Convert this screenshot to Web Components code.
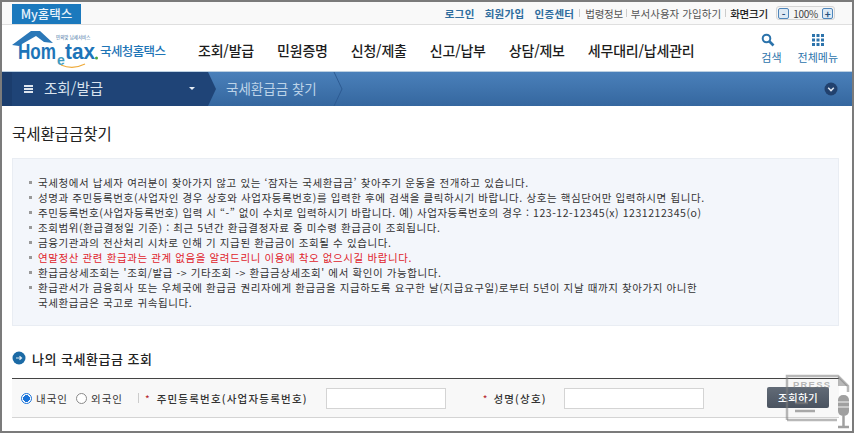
<!DOCTYPE html>
<html lang="ko">
<head>
<meta charset="utf-8">
<title>국세환급금찾기</title>
<style>
  html, body { margin: 0; height: 100%; }
  body {
    width: 854px;
    height: 433px;
    overflow: hidden;
    box-sizing: border-box;
    border: 2px solid #7b7b7b;
    background: #fff;
    font-family: "Noto Sans CJK KR", "Liberation Sans", sans-serif;
    color: #333;
    position: relative;
  }
</style>
</head>
<body>
<top-bar></top-bar>
<main-header></main-header>
<crumb-bar></crumb-bar>
<page-title>국세환급금찾기</page-title>
<notice-box>
  <notice-item>국세청에서 납세자 여러분이 찾아가지 않고 있는 ‘잠자는 국세환급금’ 찾아주기 운동을 전개하고 있습니다.</notice-item>
  <notice-item>성명과 주민등록번호(사업자인 경우 상호와 사업자등록번호)를 입력한 후에 검색을 클릭하시기 바랍니다. 상호는 핵심단어만 입력하시면 됩니다.</notice-item>
  <notice-item tight>주민등록번호(사업자등록번호) 입력 시 “-” 없이 수치로 입력하시기 바랍니다. 예) 사업자등록번호의 경우 : 123-12-12345(x) 1231212345(o)</notice-item>
  <notice-item>조회범위(환급결정일 기준) : 최근 5년간 환급결정자료 중 미수령 환급금이 조회됩니다.</notice-item>
  <notice-item>금융기관과의 전산처리 시차로 인해 기 지급된 환급금이 조회될 수 있습니다.</notice-item>
  <notice-item red>연말정산 관련 환급과는 관계 없음을 알려드리니 이용에 착오 없으시길 바랍니다.</notice-item>
  <notice-item>환급금상세조회는 '조회/발급 -&gt; 기타조회 -&gt; 환급금상세조회' 에서 확인이 가능합니다.</notice-item>
  <notice-item>환급관서가 금융회사 또는 우체국에 환급금 권리자에게 환급금을 지급하도록 요구한 날(지급요구일)로부터 5년이 지날 때까지 찾아가지 아니한<br>국세환급금은 국고로 귀속됩니다.</notice-item>
</notice-box>
<section-title>나의 국세환급금 조회</section-title>
<search-form></search-form>
<press-mark></press-mark>

<script>
class TopBar extends HTMLElement {
  constructor() {
    super();
    this.attachShadow({ mode: "open" });
    this.shadowRoot.innerHTML = `
<style>
  :host { display: flex; align-items: center; height: 22px; background: #f9f9f9; border-bottom: 1px solid #dfdfdf; padding: 0 17px 0 10px; font-size: 10.5px; color: #555; }
  .my { background: #1b79bd; color: #e8f2fa; font-size: 12.5px; font-weight: 500; width: 69px; height: 20px; line-height: 20px; text-align: center; margin-top: 2px; }
  .links { margin-left: auto; display: flex; align-items: center; }
  .b { color: #2e6d9e; font-weight: 700; margin-left: 10px; letter-spacing: .3px; }
  .b:first-child { margin-left: 0; }
  .sep { width: 1px; height: 8px; background: #ccc; margin: 0 5px; }
  .sep.n { margin: 0 3.5px; }
  .g { letter-spacing: .05px; }
  .law { letter-spacing: -.3px; }
  .size { font-weight: 500; color: #222; letter-spacing: -.2px; }
  .zoom { display: flex; align-items: center; margin-left: 8px; width: 59px; height: 14px; border: 1px solid #d5d5d5; border-radius: 3px; background: #f5f5f5; padding: 0 1px; box-sizing: border-box; justify-content: space-between; letter-spacing: -.3px; font-size: 10px; color: #444; }
  .zoom span.k { width: 11px; height: 11px; border: 1px solid #4f86bb; border-radius: 2px; background: #dde9f4; color: #24507e; line-height: 9px; text-align: center; font-weight: 700; box-sizing: border-box; }
</style>
<div class="my">My홈택스</div>
<div class="links">
  <span class="b">로그인</span><span class="b">회원가입</span><span class="b">인증센터</span>
  <i class="sep"></i><span class="law">법령정보</span>
  <i class="sep n"></i><span class="g">부서사용자 가입하기</span>
  <i class="sep n" style="margin:0 4px"></i><span class="size">화면크기</span>
  <div class="zoom"><span class="k">-</span><span>100%</span><span class="k">+</span></div>
</div>`;
  }
}

class MainHeader extends HTMLElement {
  constructor() {
    super();
    this.attachShadow({ mode: "open" });
    const menus = ["조회/발급", "민원증명", "신청/제출", "신고/납부", "상담/제보", "세무대리/납세관리"];
    this.shadowRoot.innerHTML = `
<style>
  :host { display: flex; align-items: center; height: 46px; background: #fff; border-bottom: 1px solid #bcd0e2; position: relative; }
  svg.logo { margin-left: 9px; width: 158px; height: 46px; flex: none; }
  nav { display: flex; margin-left: 29px; gap: 23px; font-size: 14px; font-weight: 500; color: #1c1c1c; letter-spacing: -.2px; margin-top: 4px; }
  .tools { margin-left: auto; display: flex; gap: 16px; margin-right: 14px; }
  .tool { display: flex; flex-direction: column; align-items: center; font-size: 11px; color: #2c73ab; line-height: 14px; gap: 3px; }
  .tool svg { display: block; }
  .tool.find svg { margin-left: -6px; }
</style>
<svg class="logo" viewBox="0 0 158 46">
  <path d="M1 20 L20 6 H29 L42 18 L33 17 L25 11 L11 19 L8 21 Z" fill="#2b78b8"/>
  <text x="45" y="14" font-size="4.500" fill="#3a6f9e" font-family="Noto Sans CJK KR">민의맞 납세서비스</text>
  <text x="7" y="34" font-size="22" font-weight="700" fill="#1d74b8" font-family="Liberation Sans" textLength="38" lengthAdjust="spacingAndGlyphs">Hom</text>
  <text x="46" y="40" font-size="14" font-weight="700" fill="#3f9bc0" font-family="Liberation Sans">e</text>
  <text x="54" y="34" font-size="22" font-weight="700" fill="#1d74b8" font-family="Liberation Sans" textLength="30" lengthAdjust="spacingAndGlyphs">tax</text>
  <circle cx="85.500" cy="33" r="1.500" fill="#49a43f"/>
  <path d="M50 40 Q62 45 74 39" fill="none" stroke="#efab3c" stroke-width="1.200"/>
  <text x="89" y="31" font-size="12.500" font-weight="500" fill="#1f75b6" font-family="Noto Sans CJK KR" letter-spacing="-.6">국세청홈택스</text>
</svg>
<nav>${menus.map((m) => `<span>${m}</span>`).join("")}</nav>
<div class="tools">
  <div class="tool find">
    <svg width="14" height="14" viewBox="0 0 14 14"><circle cx="5.500" cy="5.500" r="3.800" fill="none" stroke="#2c73ab" stroke-width="2"/><path d="M8.500 8.500 L12.500 12.500" stroke="#2c73ab" stroke-width="2.600"/></svg>
    검색
  </div>
  <div class="tool">
    <svg width="14" height="14" viewBox="0 0 14 14" fill="#2c73ab"><rect x="1" y="1" width="3" height="3"/><rect x="5.500" y="1" width="3" height="3"/><rect x="10" y="1" width="3" height="3"/><rect x="1" y="5.500" width="3" height="3"/><rect x="5.500" y="5.500" width="3" height="3"/><rect x="10" y="5.500" width="3" height="3"/><rect x="1" y="10" width="3" height="3"/><rect x="5.500" y="10" width="3" height="3"/><rect x="10" y="10" width="3" height="3"/></svg>
    전체메뉴
  </div>
</div>`;
  }
}

class CrumbBar extends HTMLElement {
  constructor() {
    super();
    this.attachShadow({ mode: "open" });
    this.shadowRoot.innerHTML = `
<style>
  :host { display: flex; align-items: center; height: 34px; background: linear-gradient(#4a80ba, #35679f); color: #fff; position: relative; overflow: hidden; }
  .home { display: flex; align-items: center; width: 206px; height: 100%; background: linear-gradient(90deg, #1b3d6d 0 10px, #1f4477 10px); box-sizing: border-box; padding: 0 0 3px 22px; font-size: 14.5px; color: #d9e3ee; position: relative; flex: none; }
  .home::after { content: ""; position: absolute; left: 206px; top: 0; border-left: 8px solid #1f4477; border-top: 17px solid transparent; border-bottom: 17px solid transparent; }
  .burger { width: 9px; height: 2px; background: #dfe6ef; box-shadow: 0 3px 0 #dfe6ef, 0 6px 0 #dfe6ef; margin: -3px 11px 0 0; }
  .caret { position: absolute; left: 187px; top: 15px; border: 3.500px solid transparent; border-top-color: #e8eef5; }
  .cur { margin: 0 0 2px 18px; font-size: 13.500px; color: #bcd3e8; }
  .chev { position: absolute; left: 331px; top: 0; }
  .more { position: absolute; right: 14px; top: 10px; width: 14px; height: 14px; }
</style>
<div class="home"><i class="burger"></i>조회/발급<i class="caret"></i></div>
<div class="cur">국세환급금 찾기</div>
<svg class="chev" width="12" height="34" viewBox="0 0 12 34"><path d="M1 0 L9 17 L1 34" fill="none" stroke="#2d5b92" stroke-width="1"/></svg>
<svg class="more" viewBox="0 0 14 14"><circle cx="7" cy="7" r="6.500" fill="#21416e"/><path d="M4.200 5.800 L7 8.600 L9.800 5.800" fill="none" stroke="#dfe6ef" stroke-width="1.500"/></svg>`;
  }
}

class PageTitle extends HTMLElement {
  constructor() {
    super();
    this.attachShadow({ mode: "open" });
    this.shadowRoot.innerHTML = `
<style>
  :host { display: block; font-size: 15.500px; line-height: 20px; color: #222; padding: 17px 0 0 10px; height: 35px; }
</style>
<slot></slot>`;
  }
}

class NoticeBox extends HTMLElement {
  constructor() {
    super();
    this.attachShadow({ mode: "open" });
    this.shadowRoot.innerHTML = `
<style>
  :host { display: block; margin: 0 13px 0 10px; padding: 16px 0 14px 15px; height: 168px; box-sizing: border-box; background: #f3f6fb; border: 1px solid #e9edf3; }
</style>
<slot></slot>`;
  }
}

class NoticeItem extends HTMLElement {
  constructor() {
    super();
    this.attachShadow({ mode: "open" });
    this.shadowRoot.innerHTML = `
<style>
  :host { display: block; position: relative; padding-left: 10px; font-size: 10.500px; line-height: 15px; color: #333; letter-spacing: .6px; white-space: nowrap; }
  :host([tight]) { letter-spacing: .55px; }
  :host([red]) { color: #e0242c; }
  :host::before { content: ""; position: absolute; left: 1px; top: 6px; width: 3px; height: 3px; background: #999; }
</style>
<slot></slot>`;
  }
}

class SectionTitle extends HTMLElement {
  constructor() {
    super();
    this.attachShadow({ mode: "open" });
    this.shadowRoot.innerHTML = `
<style>
  :host { display: flex; align-items: center; gap: 6px; margin: 22px 0 0 10px; height: 20px; font-size: 13px; font-weight: 500; color: #222; letter-spacing: .5px; }
</style>
<svg width="14" height="14" viewBox="0 0 14 14"><circle cx="7" cy="7" r="6.500" fill="#1b6aa5"/><path d="M4 7 H9 M7.500 5.300 L9.500 7 L7.500 8.700" fill="none" stroke="#dbe9f4" stroke-width="1.200"/></svg>
<slot></slot>`;
  }
}

class SearchForm extends HTMLElement {
  constructor() {
    super();
    this.attachShadow({ mode: "open" });
    this.shadowRoot.innerHTML = `
<style>
  :host { display: flex; align-items: center; margin: 10px 0 0 10px; width: 827px; height: 40px; box-sizing: border-box; background: #f8f8f8; border-top: 1px solid #444; border-bottom: 1px solid #d4d4d4; font-size: 10.500px; color: #333; letter-spacing: 1px; position: relative; }
  .radio { width: 11px; height: 11px; border-radius: 50%; border: 1px solid #8a8a8a; background: #fff; flex: none; box-sizing: border-box; margin-right: 4px; }
  .radio.on { border: 1px solid #1a73d9; background: radial-gradient(circle, #1a73d9 0 3.200px, #fff 3.600px); }
  .sep { width: 1px; height: 10px; background: #ccc; margin: 0 6px 0 15px; }
  .star { color: #b5222a; margin-right: 7px; font-size: 10px; letter-spacing: 0; }
  .lbl { font-weight: 500; letter-spacing: 1.2px; }
  input { height: 21px; box-sizing: border-box; border: 1px solid #d4d4d4; background: #fff; margin: 0; padding: 0; }
  button { position: absolute; left: 755px; top: 8px; width: 62px; height: 21px; border: 0; border-radius: 2px; background: linear-gradient(#626b77, #4a5360); color: #fff; font: inherit; font-weight: 500; letter-spacing: .3px; padding: 0; }
</style>
<i class="radio on" style="margin-left:9px"></i><span>내국인</span>
<i class="radio" style="margin-left:8px"></i><span>외국인</span>
<i class="sep"></i><span class="star">*</span><span class="lbl">주민등록번호(사업자등록번호)</span>
<input style="width:120px;margin-left:18px">
<span class="star" style="margin-left:37px;margin-right:6px">*</span><span class="lbl">성명(상호)</span>
<input style="width:140px;margin-left:17px">
<button>조회하기</button>`;
  }
}

class PressMark extends HTMLElement {
  constructor() {
    super();
    this.attachShadow({ mode: "open" });
    this.shadowRoot.innerHTML = `
<style>
  :host { display: block; position: absolute; left: 783px; top: 372px; width: 66px; height: 57px; pointer-events: none; }
  svg { display: block; }
</style>
<svg width="66" height="57" viewBox="0 0 66 57">
  <path d="M2 46 V2 H53 L63 12 V18" fill="none" stroke="#7d7d7d" stroke-opacity=".55" stroke-width="2.500"/>
  <path d="M2 46 H52" fill="none" stroke="#7d7d7d" stroke-opacity=".55" stroke-width="2.500"/>
  <path d="M53 2 V12 H63 Z" fill="#7d7d7d" fill-opacity=".55"/>
  <text x="8" y="13.500" font-family="Liberation Sans" font-size="9.500" font-weight="700" fill="#7d7d7d" fill-opacity=".55" letter-spacing="1.200">PRESS</text>
  <path d="M10 29 H23 M10 37 H30" stroke="#7d7d7d" stroke-opacity=".65" stroke-width="2.500"/>
  <rect x="53" y="21" width="11" height="21" rx="5" fill="#888" fill-opacity=".8"/>
  <path d="M53 28 H64 M53 33 H64" stroke="#f4f4f4" stroke-width="1"/>
  <path d="M58.500 42 V52 M53 53 H64" stroke="#888" stroke-opacity=".8" stroke-width="2.500"/>
</svg>`;
  }
}

customElements.define("top-bar", TopBar);
customElements.define("main-header", MainHeader);
customElements.define("crumb-bar", CrumbBar);
customElements.define("page-title", PageTitle);
customElements.define("notice-box", NoticeBox);
customElements.define("notice-item", NoticeItem);
customElements.define("section-title", SectionTitle);
customElements.define("search-form", SearchForm);
customElements.define("press-mark", PressMark);
</script>
</body>
</html>
